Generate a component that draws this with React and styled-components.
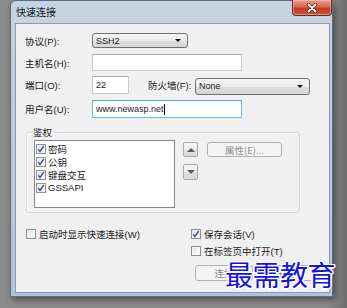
import React from "react";
import styled, { createGlobalStyle } from "styled-components";

const Global = createGlobalStyle`
  html, body { margin: 0; padding: 0; background: #8a8a8a; }
  * { box-sizing: border-box; }
`;

const FONT = `"Liberation Sans", "Noto Sans CJK SC", sans-serif`;

const Page = styled.div`
  width: 347px;
  height: 308px;
  padding-left: 10px;
  background: linear-gradient(90deg, #8c8c8c 0%, #8c8c8c 94%, #6e6e6e 100%);
  position: relative;
  overflow: hidden;
  font-family: ${FONT};
  font-size: 9.5px;
  color: #1a1a1a;
`;

const Window = styled.div`
  width: 323px;
  height: 297px;
  display: flex;
  flex-direction: column;
  background: linear-gradient(180deg, #c7d4e2 0%, #bccbdb 40%, #b3c3d6 100%);
  border: 1px solid #5c6d82;
  border-radius: 6px 6px 0 0;
  padding: 0 2px 3px 4px;
  box-shadow: 2px 3px 6px rgba(0, 0, 0, 0.45);
`;

const TitleBar = styled.div`
  height: 22px;
  display: flex;
  align-items: flex-start;
  justify-content: space-between;
  margin: 0 -2px 0 -4px;
  padding-left: 5px;
`;

const Title = styled.span`
  font-family: "Noto Sans CJK SC", sans-serif;
  font-size: 10px;
  line-height: 22px;
  color: #111c28;
`;

const CloseButton = styled.div`
  width: 40px;
  height: 16px;
  margin-top: -1px;
  border: 1px solid #6d2a1f;
  border-top: none;
  border-radius: 0 0 4px 4px;
  background: linear-gradient(180deg, #eba08e 0%, #d9664f 45%, #c23a24 55%, #c9553a 100%);
  display: flex;
  align-items: center;
  justify-content: center;
  box-shadow: inset 0 0 0 1px rgba(255, 210, 200, 0.45);
`;

const Client = styled.div`
  flex: 1;
  background: #f0f0f0;
  border: 1px solid #8a9bb0;
  padding: 9px 0 0 9px;
  display: flex;
  flex-direction: column;
  position: relative;
`;

const Row = styled.div`
  display: flex;
  align-items: center;
  height: ${(p) => p.$h}px;
  margin-top: ${(p) => p.$mt || 0}px;
`;

const Label = styled.span`
  width: ${(p) => p.$w || 67}px;
  margin-left: ${(p) => p.$ml || 0}px;
  flex: none;
  white-space: nowrap;
  font-family: ${FONT};
`;

const Select = styled.div`
  width: ${(p) => p.$w}px;
  height: ${(p) => p.$h}px;
  margin-top: ${(p) => p.$mt || 0}px;
  border: 1px solid #707070;
  border-radius: 3px;
  background: linear-gradient(180deg, #f4f4f4 0%, #ececec 50%, #dedede 51%, #d6d6d6 100%);
  display: flex;
  align-items: center;
  justify-content: space-between;
  padding: 0 6px 0 3px;
  font-size: 9px;
  color: #1a1a1a;
`;

const DownTri = styled.span`
  width: 0;
  height: 0;
  border-left: 3px solid transparent;
  border-right: 3px solid transparent;
  border-top: 3px solid #111;
`;

const Input = styled.div`
  width: ${(p) => p.$w}px;
  height: ${(p) => p.$h}px;
  background: #fff;
  border: 1px solid ${(p) => (p.$focus ? "#7eb4ea" : "#c5cbd3")};
  border-top-color: ${(p) => (p.$focus ? "#569de5" : "#a6adb6")};
  display: flex;
  align-items: center;
  padding-left: 3px;
  font-size: 9px;
  color: #1a1a1a;
`;

const Caret = styled.span`
  display: inline-block;
  width: 1px;
  height: 11px;
  background: #000;
`;

const GroupBox = styled.div`
  position: relative;
  width: 274px;
  margin: 14px 0 0 1px;
  border: 1px solid #d5dadf;
  border-radius: 3px;
  padding: 7px 7px 4px 7px;
  display: flex;
  box-shadow: inset 1px 1px 0 #fff;
`;

const Legend = styled.span`
  position: absolute;
  top: -8px;
  left: 4px;
  padding: 0 2px;
  background: #f0f0f0;
  line-height: 14px;
  font-family: "Noto Sans CJK SC", sans-serif;
`;

const ListBox = styled.div`
  width: 141px;
  height: 68px;
  background: #fff;
  border: 1px solid #828790;
  padding: 1px 0 0 1px;
  display: flex;
  flex-direction: column;
`;

const ListItem = styled.div`
  height: 13px;
  display: flex;
  align-items: center;
  gap: 2px;
  white-space: nowrap;
`;

const CheckBox = styled.span`
  width: 10px;
  height: 10px;
  flex: none;
  border: 1px solid #8e8f8f;
  background: linear-gradient(135deg, #dcdcdc 0%, #f4f4f4 60%, #fbfbfb 100%);
  box-shadow: inset 0 0 0 1px #f4f4f4;
  display: flex;
  align-items: center;
  justify-content: center;
`;

const ArrowCol = styled.div`
  display: flex;
  flex-direction: column;
  gap: 7px;
  margin: 2px 0 0 8px;
`;

const ArrowButton = styled.div`
  width: 15px;
  height: ${(p) => p.$h}px;
  border: 1px solid #a7a9ab;
  border-radius: 2px;
  background: linear-gradient(180deg, #f6f6f6 0%, #ececec 50%, #e0e0e0 51%, #dadada 100%);
  display: flex;
  align-items: center;
  justify-content: center;
`;

const Tri = styled.span`
  width: 0;
  height: 0;
  border-left: 4px solid transparent;
  border-right: 4px solid transparent;
  ${(p) => (p.$up ? "border-bottom: 4px solid #5a5a5a;" : "border-top: 4px solid #5a5a5a;")}
`;

const PushButton = styled.div`
  width: ${(p) => p.$w}px;
  height: ${(p) => p.$h}px;
  margin-left: ${(p) => p.$ml || 0}px;
  margin-top: ${(p) => p.$mt || 0}px;
  border: 1px solid #adb2b5;
  border-radius: 3px;
  background: #f4f4f4;
  color: #8d8d8d;
  display: flex;
  align-items: center;
  justify-content: center;
  font-family: "Noto Sans CJK SC", sans-serif;
  font-size: 9.5px;
`;

const Options = styled.div`
  display: grid;
  grid-template-columns: 165px 1fr;
  grid-auto-rows: 13px;
  row-gap: 4px;
  margin: 14px 0 0 1px;
`;

const CheckLabel = styled.div`
  display: flex;
  align-items: center;
  gap: 3px;
  white-space: nowrap;
  grid-column: ${(p) => p.$col};
`;

const ButtonRow = styled.div`
  display: flex;
  gap: 4px;
  margin: 8px 0 0 170px;
`;

const Watermark = styled.div`
  position: absolute;
  left: 225px;
  top: 258px;
  font-family: "Noto Sans CJK SC", serif;
  font-weight: 400;
  font-size: 28px;
  line-height: 32px;
  letter-spacing: -0.5px;
  color: #1212e4;
  text-shadow: -1px -1px 0 #fff, 1px -1px 0 #fff, -1px 1px 0 #fff, 1px 1px 0 #fff,
    0 -1.5px 0 #fff, 0 1.5px 0 #fff, -1.5px 0 0 #fff, 1.5px 0 0 #fff;
`;

const Check = ({ checked }) => (
  <CheckBox>
    {checked && (
      <svg width="8" height="8" viewBox="0 0 8 8">
        <path d="M1.2 4.2 L3 6.4 L6.8 1" fill="none" stroke="#3d5aa0" strokeWidth="1.5" />
      </svg>
    )}
  </CheckBox>
);

export default function App() {
  return (
    <>
      <Global />
      <Page>
        <Window>
          <TitleBar>
            <Title>快速连接</Title>
            <CloseButton>
              <svg width="12" height="10" viewBox="0 0 12 10">
                <path d="M2.5 1.5 L9.5 8.5 M9.5 1.5 L2.5 8.5" stroke="#5a2418" strokeWidth="3.2" strokeLinecap="round" />
                <path d="M2.5 1.5 L9.5 8.5 M9.5 1.5 L2.5 8.5" stroke="#ffffff" strokeWidth="1.8" strokeLinecap="round" />
              </svg>
            </CloseButton>
          </TitleBar>
          <Client>
            <Row $h={15}>
              <Label>协议(P):</Label>
              <Select $w={96} $h={15}>
                <span>SSH2</span>
                <DownTri />
              </Select>
            </Row>
            <Row $h={17} $mt={6}>
              <Label>主机名(H):</Label>
              <Input $w={150} $h={17} />
            </Row>
            <Row $h={18} $mt={5}>
              <Label>端口(O):</Label>
              <Input $w={37} $h={18}>22</Input>
              <Label $w={47} $ml={19}>防火墙(F):</Label>
              <Select $w={115} $h={17} $mt={2}>
                <span>None</span>
                <DownTri />
              </Select>
            </Row>
            <Row $h={18} $mt={6}>
              <Label>用户名(U):</Label>
              <Input $w={150} $h={18} $focus>
                www.newasp.net<Caret />
              </Input>
            </Row>

            <GroupBox>
              <Legend>鉴权</Legend>
              <ListBox>
                <ListItem><Check checked />密码</ListItem>
                <ListItem><Check checked />公钥</ListItem>
                <ListItem><Check checked />键盘交互</ListItem>
                <ListItem><Check checked />GSSAPI</ListItem>
              </ListBox>
              <ArrowCol>
                <ArrowButton $h={15}><Tri $up /></ArrowButton>
                <ArrowButton $h={16}><Tri /></ArrowButton>
              </ArrowCol>
              <PushButton $w={75} $h={15} $ml={9} $mt={2}>属性(E)...</PushButton>
            </GroupBox>

            <Options>
              <CheckLabel $col="1"><Check />启动时显示快速连接(W)</CheckLabel>
              <CheckLabel $col="2"><Check checked />保存会话(V)</CheckLabel>
              <CheckLabel $col="2"><Check />在标签页中打开(T)</CheckLabel>
            </Options>

            <ButtonRow>
              <PushButton $w={58} $h={16}>连接</PushButton>
              <PushButton $w={57} $h={16}>关闭</PushButton>
            </ButtonRow>
          </Client>
        </Window>
        <Watermark>最需教育</Watermark>
      </Page>
    </>
  );
}
